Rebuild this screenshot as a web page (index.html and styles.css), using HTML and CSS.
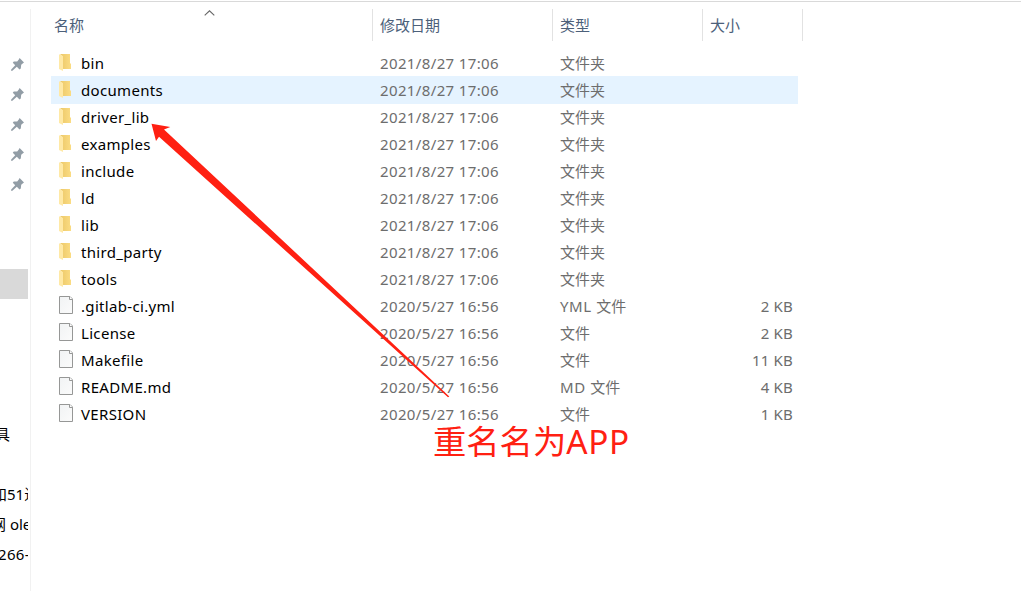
FILE: index.html
```html
<!DOCTYPE html>
<html lang="zh-CN">
<head>
  <meta charset="UTF-8">
  <meta name="viewport" content="width=device-width, initial-scale=1.0">
  <title>文件列表</title>
  <link rel="stylesheet" href="styles.css">
</head>
<body>
  <!-- Shared icons -->
  <svg class="icon-defs" width="0" height="0">
    <defs>
      <linearGradient id="folderBack" x1="0" y1="0" x2="1" y2="0">
        <stop offset="0" stop-color="#ecc868"/>
        <stop offset="1" stop-color="#fbdc83"/>
      </linearGradient>
      <linearGradient id="paper" x1="0" y1="0" x2="1" y2="1">
        <stop offset="0" stop-color="#f1f3f4"/>
        <stop offset="1" stop-color="#fbfbfb"/>
      </linearGradient>
    </defs>
    <symbol id="folder" viewBox="0 0 12 17">
      <path d="M1 0H11V9.5H12V15H3V2Z" fill="url(#folderBack)"/>
      <path d="M0 0.3L4 2V17L0 15Z" fill="#ffe9a6"/>
    </symbol>
    <symbol id="file" viewBox="0 0 14 18">
      <path d="M0.5 0.5H11L13.5 3V17.5H0.5Z" fill="url(#paper)" stroke="#969796"/>
      <path d="M10.5 0.5V3.5H13.5" fill="#fff" stroke="#969796"/>
    </symbol>
    <symbol id="pin" viewBox="0 0 13 13">
      <path d="M8.6 0L13 4.4L12 5.2L10.2 6.8L9.8 10.4L8.5 11.4L5.8 8.8L1.4 12.8L0 12.8L0.2 11.4L4.2 7.2L1.8 4.7L2.8 3.5L6.2 3.4L7.8 1.6Z" fill="#929da6"/>
    </symbol>
  </svg>

  <div class="explorer">
    <div class="sidebar">
      <div class="side-item"><svg class="pin"><use href="#pin"/></svg></div>
      <div class="side-item"><svg class="pin"><use href="#pin"/></svg></div>
      <div class="side-item"><svg class="pin"><use href="#pin"/></svg></div>
      <div class="side-item"><svg class="pin"><use href="#pin"/></svg></div>
      <div class="side-item"><svg class="pin"><use href="#pin"/></svg></div>
      <div class="side-item selected"></div>
      <div class="side-item group cut-tool">具</div>
      <div class="side-item below cut-and">和51进</div>
      <div class="side-item cut-net">网 ole</div>
      <div class="side-item cut-num">266-</div>
    </div>

    <div class="content">
      <div class="header">
        <div class="col">名称
          <svg class="sort" width="11" height="6" viewBox="0 0 11 6"><path d="M0.7 5.3L5.5 0.8L10.3 5.3" fill="none" stroke="#666" stroke-width="1.1"/></svg>
        </div>
        <div class="col">修改日期</div>
        <div class="col">类型</div>
        <div class="col">大小</div>
      </div>

      <div class="files">
        <div class="row"><div class="name"><svg class="folder"><use href="#folder"/></svg><span>bin</span></div><div class="date">2021/8/27 17:06</div><div class="type">文件夹</div><div class="size"></div></div>
        <div class="row hover"><div class="name"><svg class="folder"><use href="#folder"/></svg><span>documents</span></div><div class="date">2021/8/27 17:06</div><div class="type">文件夹</div><div class="size"></div></div>
        <div class="row"><div class="name"><svg class="folder"><use href="#folder"/></svg><span>driver_lib</span></div><div class="date">2021/8/27 17:06</div><div class="type">文件夹</div><div class="size"></div></div>
        <div class="row"><div class="name"><svg class="folder"><use href="#folder"/></svg><span>examples</span></div><div class="date">2021/8/27 17:06</div><div class="type">文件夹</div><div class="size"></div></div>
        <div class="row"><div class="name"><svg class="folder"><use href="#folder"/></svg><span>include</span></div><div class="date">2021/8/27 17:06</div><div class="type">文件夹</div><div class="size"></div></div>
        <div class="row"><div class="name"><svg class="folder"><use href="#folder"/></svg><span>ld</span></div><div class="date">2021/8/27 17:06</div><div class="type">文件夹</div><div class="size"></div></div>
        <div class="row"><div class="name"><svg class="folder"><use href="#folder"/></svg><span>lib</span></div><div class="date">2021/8/27 17:06</div><div class="type">文件夹</div><div class="size"></div></div>
        <div class="row"><div class="name"><svg class="folder"><use href="#folder"/></svg><span>third_party</span></div><div class="date">2021/8/27 17:06</div><div class="type">文件夹</div><div class="size"></div></div>
        <div class="row"><div class="name"><svg class="folder"><use href="#folder"/></svg><span>tools</span></div><div class="date">2021/8/27 17:06</div><div class="type">文件夹</div><div class="size"></div></div>
        <div class="row"><div class="name"><svg class="file"><use href="#file"/></svg><span>.gitlab-ci.yml</span></div><div class="date">2020/5/27 16:56</div><div class="type"><span class="ext">YML </span>文件</div><div class="size">2 KB</div></div>
        <div class="row"><div class="name"><svg class="file"><use href="#file"/></svg><span>License</span></div><div class="date">2020/5/27 16:56</div><div class="type">文件</div><div class="size">2 KB</div></div>
        <div class="row"><div class="name"><svg class="file"><use href="#file"/></svg><span>Makefile</span></div><div class="date">2020/5/27 16:56</div><div class="type">文件</div><div class="size">11 KB</div></div>
        <div class="row"><div class="name"><svg class="file"><use href="#file"/></svg><span>README.md</span></div><div class="date">2020/5/27 16:56</div><div class="type"><span class="ext">MD </span>文件</div><div class="size">4 KB</div></div>
        <div class="row"><div class="name"><svg class="file"><use href="#file"/></svg><span>VERSION</span></div><div class="date">2020/5/27 16:56</div><div class="type">文件</div><div class="size">1 KB</div></div>
      </div>
    </div>

    <!-- Annotation over the list -->
    <svg class="arrow" width="1021" height="591" viewBox="0 0 1021 591">
      <polygon points="151.5,123.8 170.3,127 164,129.5 449.3,396.4 448,397.2 159,136.7 156,141" fill="#ff2012"/>
    </svg>
    <div class="note">重名名为<span>APP</span></div>
  </div>
</body>
</html>
```

FILE: styles.css
```css
* {
  box-sizing: border-box;
}

body {
  margin: 0;
  background: #fff;
  font-family: "Noto Sans", "Noto Sans CJK SC", sans-serif;
  font-size: 15px;
  color: #000;
  overflow: hidden;
}

.icon-defs {
  position: absolute;
}

.explorer {
  position: relative;
  display: flex;
  height: 591px;
  padding-top: 9px;
  background: linear-gradient(#d9d9d9, #d9d9d9) 0 1px / 100% 1px no-repeat;
}

/* Sidebar */
.sidebar {
  width: 31px;
  padding-top: 40px;
  border-right: 1px solid #f1f1f1;
}

.side-item {
  display: flex;
  align-items: center;
  width: 28px;
  height: 30px;
  overflow: hidden;
  white-space: pre;
  line-height: 30px;
}

.pin {
  width: 13px;
  height: 13px;
  margin-left: 11px;
}

.selected {
  margin-top: 70px;
  background: #d9d9d9;
}

.group {
  margin-top: 120px;
}

.below {
  margin-top: 30px;
}

.cut-tool {
  text-indent: -5px;
}

.cut-and {
  text-indent: -8px;
}

.cut-net {
  text-indent: -9px;
}

.cut-num {
  text-indent: -2px;
  letter-spacing: 0.35px;
}

/* File list */
.content {
  padding-left: 20px;
}

.header,
.row {
  display: grid;
  grid-template-columns: 322px 180px 150px 100px;
}

.header {
  height: 32px;
  color: #4c607a;
}

.col {
  position: relative;
  padding-left: 7px;
  line-height: 32px;
  border-right: 1px solid #e2e2e2;
}

.col:first-child {
  padding-left: 3px;
}

.sort {
  position: absolute;
  top: 1px;
  left: 153px;
}

.files {
  padding-top: 9px;
}

.row {
  grid-template-columns: 322px 180px 150px 95px;
  width: 747px;
  height: 27px;
  line-height: 27px;
  color: #6d6d6d;
}

.row.hover {
  background: #e5f3ff;
  box-shadow: 0 -1px #e5f3ff;
}

.name {
  display: flex;
  padding-left: 8px;
  color: #000;
  letter-spacing: 0.32px;
}

.name svg {
  flex: none;
}

.folder {
  width: 12px;
  height: 17px;
  margin: 4px 10px 0 0;
}

.file {
  width: 14px;
  height: 18px;
  margin: 3px 8px 0 0;
}

.date,
.type {
  padding-left: 7px;
}

.date {
  letter-spacing: 0.37px;
}

.ext {
  letter-spacing: 0.6px;
}

.size {
  padding-right: 5px;
  text-align: right;
  letter-spacing: 0.2px;
}

/* Annotation */
.arrow {
  position: absolute;
  top: 0;
  left: 0;
}

.note {
  position: absolute;
  top: 417px;
  left: 433px;
  font-size: 33.3px;
  line-height: 48px;
  color: #ff2012;
  white-space: nowrap;
}

.note span {
  letter-spacing: 0.7px;
}
```
